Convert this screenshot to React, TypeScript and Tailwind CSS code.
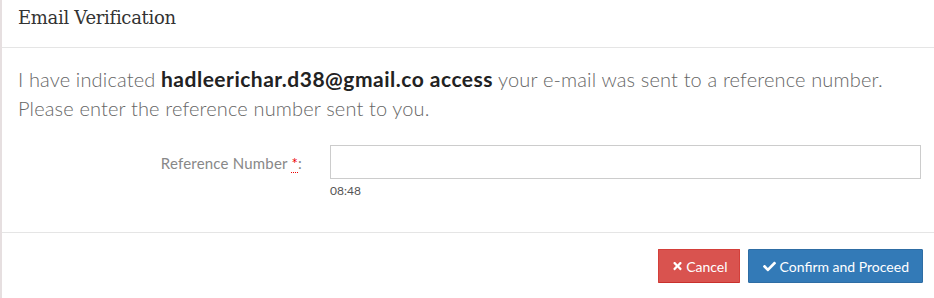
import { FaTimes, FaCheck } from "react-icons/fa";

export default function App() {
  return (
    <div className="w-[934px] h-[298px] bg-white flex border-l-2 border-[#e6dfe0] overflow-hidden">
      <div className="flex-1 flex flex-col">
        <header className="h-[48px] pl-[16px] pt-[7px] border-b border-[#e5e5e5]">
          <h4 className="text-[18px] leading-[22px] text-[#333] font-['DejaVu_Serif',serif] tracking-[-0.3px]">
            Email Verification
          </h4>
        </header>

        <main className="flex-1 pl-[16px] pr-[13px] pt-[16px] font-['Lato',sans-serif]">
          <p className="text-[20px] leading-[29px] font-light text-[#666] tracking-[0.15px]">
            I have indicated{" "}
            <strong className="font-bold text-[21px] tracking-[0.5px] text-[#222]">
              hadleerichar.d38@gmail.co access
            </strong>{" "}
            your e-mail was sent to a reference number.
            <br />
            Please enter the reference number sent to you.
          </p>

          <div className="mt-[22px] flex">
            <label className="w-[298px] pr-[14px] pt-[7px] text-right text-[15px] font-normal text-[#888] tracking-[0.2px]">
              Reference Number{" "}
              <abbr className="text-[#e00] no-underline border-b border-dotted border-[#e00]">*</abbr>:
            </label>
            <div className="flex-1 pl-[14px]">
              <input
                type="text"
                className="w-full h-[34px] border border-[#ccc] outline-none"
              />
              <div className="mt-[3px] text-[12px] text-[#555]">08:48</div>
            </div>
          </div>
        </main>

        <footer className="h-[66px] border-t border-[#e5e5e5] flex items-start justify-end gap-[8px] pr-[11px] pt-[16px] font-['Lato',sans-serif]">
          <button className="h-[34px] pl-[13px] pr-[11px] flex items-center gap-[3px] bg-[#d9534f] border border-[#d43f3a] border-b-[#c9302c] text-white text-[14px] rounded-[1px]">
            <FaTimes className="w-[11px] h-[12px]" />
            Cancel
          </button>
          <button className="h-[34px] pl-[14px] pr-[13px] flex items-center gap-[4px] bg-[#337ab7] border border-[#2e6da4] text-white text-[14px] rounded-[1px]">
            <FaCheck className="w-[13px] h-[13px]" />
            Confirm and Proceed
          </button>
        </footer>
      </div>
    </div>
  );
}
